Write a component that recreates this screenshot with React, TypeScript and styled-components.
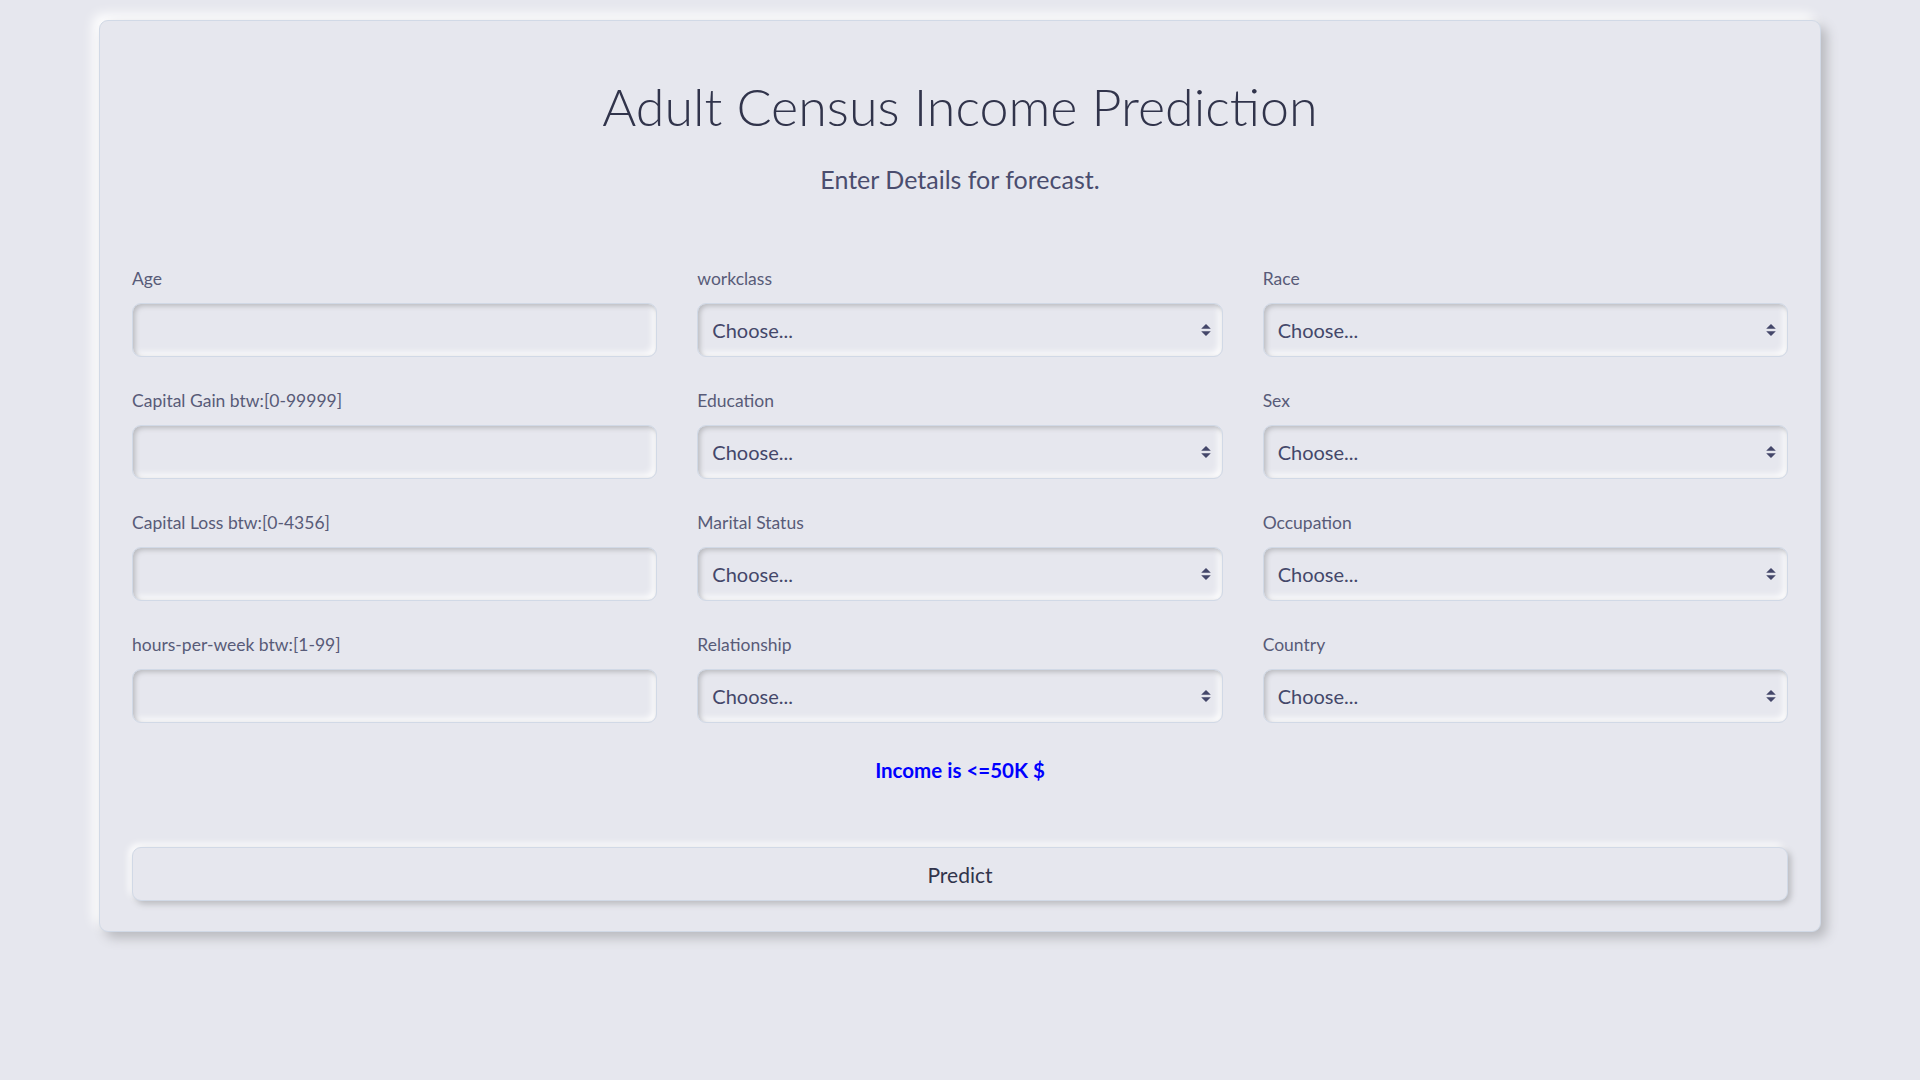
import React from 'react';
import styled, { createGlobalStyle } from 'styled-components';

const GlobalStyle = createGlobalStyle`
  html, body {
    margin: 0;
    padding: 0;
    background: #e6e7ee;
  }
  body {
    font-family: Lato, 'Noto Sans', 'Liberation Sans', sans-serif;
    color: #44476a;
  }
  * {
    box-sizing: border-box;
  }
`;

const Page = styled.div`
  min-height: 1080px;
  padding-top: 20px;
`;

const Card = styled.div`
  width: 1722px;
  margin: 0 auto;
  background: #e6e7ee;
  border: 1px solid #d1d9e6;
  border-radius: 9px;
  box-shadow: 6px 6px 12px #b8b9be, -6px -6px 12px #ffffff;
  padding: 54px 32px 30px;
`;

const Title = styled.h1`
  margin: 0;
  text-align: center;
  font-size: 52px;
  font-weight: 300;
  line-height: 1.2;
  color: #31344b;
`;

const Subtitle = styled.p`
  margin: 26px 0 0;
  text-align: center;
  font-size: 25px;
  font-weight: 400;
  line-height: 33px;
  color: #4a4d6e;
`;

const Grid = styled.div`
  margin-top: 71px;
  display: grid;
  grid-template-columns: repeat(3, 1fr);
  column-gap: 40px;
  row-gap: 32px;
`;

const Field = styled.div`
  display: flex;
  flex-direction: column;
  gap: 12px;
`;

const Label = styled.label`
  font-size: 17.5px;
  line-height: 24px;
  color: #585b78;
`;

const controlBase = `
  width: 100%;
  height: 54px;
  border: 1px solid #d1d9e6;
  border-radius: 9px;
  background: #e6e7ee;
  box-shadow: inset 2px 2px 5px #b8b9be, inset -3px -3px 7px #ffffff;
  font-family: inherit;
  font-size: 20px;
  color: #44476a;
  padding: 0 14px;
  outline: none;
`;

const TextInput = styled.input`
  ${controlBase}
`;

const SelectWrap = styled.div`
  position: relative;
`;

const Select = styled.select`
  ${controlBase}
  appearance: none;
  -webkit-appearance: none;
  padding-right: 36px;
`;

const Arrow = styled.svg`
  position: absolute;
  right: 12px;
  top: 50%;
  transform: translateY(-50%);
  pointer-events: none;
`;

const Result = styled.p`
  margin: 34px 0 0;
  text-align: center;
  font-size: 20.5px;
  font-weight: 700;
  line-height: 27px;
  color: #0000ff;
`;

const Button = styled.button`
  display: block;
  width: 100%;
  height: 54px;
  margin-top: 63px;
  border: 1px solid #d1d9e6;
  border-radius: 9px;
  background: #e6e7ee;
  box-shadow: 3px 3px 6px #b8b9be, -3px -3px 7px #ffffff;
  font-family: inherit;
  font-size: 21px;
  color: #31344b;
  cursor: pointer;
`;

type FieldDef = { label: string; kind: 'input' | 'select' };

const fields: FieldDef[] = [
  { label: 'Age', kind: 'input' },
  { label: 'workclass', kind: 'select' },
  { label: 'Race', kind: 'select' },
  { label: 'Capital Gain btw:[0-99999]', kind: 'input' },
  { label: 'Education', kind: 'select' },
  { label: 'Sex', kind: 'select' },
  { label: 'Capital Loss btw:[0-4356]', kind: 'input' },
  { label: 'Marital Status', kind: 'select' },
  { label: 'Occupation', kind: 'select' },
  { label: 'hours-per-week btw:[1-99]', kind: 'input' },
  { label: 'Relationship', kind: 'select' },
  { label: 'Country', kind: 'select' },
];

const SelectControl = () => (
  <SelectWrap>
    <Select defaultValue="">
      <option value="">Choose...</option>
    </Select>
    <Arrow width="10" height="12" viewBox="0 0 4 5">
      <path fill="#44476a" d="M2 0L0 2h4zm0 5L0 3h4z" />
    </Arrow>
  </SelectWrap>
);

const App: React.FC = () => {
  return (
    <>
      <GlobalStyle />
      <Page>
        <Card>
          <Title>Adult Census Income Prediction</Title>
          <Subtitle>Enter Details for forecast.</Subtitle>
          <Grid>
            {fields.map((f) => (
              <Field key={f.label}>
                <Label>{f.label}</Label>
                {f.kind === 'input' ? <TextInput type="text" /> : <SelectControl />}
              </Field>
            ))}
          </Grid>
          <Result>Income is &lt;=50K $</Result>
          <Button type="button">Predict</Button>
        </Card>
      </Page>
    </>
  );
};

export default App;
